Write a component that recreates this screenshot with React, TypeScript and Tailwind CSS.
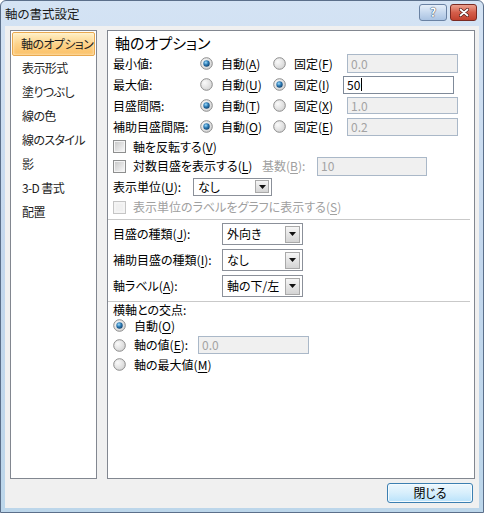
import React from "react";

const Radio = ({ checked, disabled }: { checked?: boolean; disabled?: boolean }) => (
  <svg width="13" height="13" viewBox="0 0 13 13" className="shrink-0">
    <defs>
      <radialGradient id="rOff" cx="0.35" cy="0.35" r="0.8">
        <stop offset="0" stopColor="#fafafa" />
        <stop offset="1" stopColor="#cfcfcf" />
      </radialGradient>
      <radialGradient id="rOn" cx="0.4" cy="0.35" r="0.7">
        <stop offset="0" stopColor="#9fdcfb" />
        <stop offset="0.5" stopColor="#2c7ab4" />
        <stop offset="1" stopColor="#0f3f6b" />
      </radialGradient>
    </defs>
    <circle cx="6.5" cy="6.5" r="5.8" fill="url(#rOff)" stroke={disabled ? "#c2c2c2" : "#8c8c8c"} strokeWidth="1" />
    {checked && <circle cx="6.5" cy="6.5" r="3.2" fill="url(#rOn)" />}
  </svg>
);

const Check = ({ disabled }: { disabled?: boolean }) => (
  <div
    className={
      disabled
        ? "w-[13px] h-[13px] shrink-0 border border-[#c5c5c5] bg-[#f4f4f4] p-[2px]"
        : "w-[13px] h-[13px] shrink-0 border border-[#8e8f8f] bg-[#f4f4f4] p-[1px]"
    }
  >
    <div
      className={
        disabled
          ? "w-full h-full bg-[#f0f0f0]"
          : "w-full h-full bg-linear-to-br from-[#cbcbcb] to-[#f6f6f6]"
      }
    />
  </div>
);

const U = ({ children }: { children: React.ReactNode }) => <span className="underline underline-offset-[2px]">{children}</span>;

const Field = ({ value, active, className }: { value: string; active?: boolean; className: string }) => (
  <div
    className={
      (active
        ? "border border-[#7f8a99] bg-white text-black "
        : "border border-[#aab8c8] bg-[#f0f0f0] text-[#a3a3a3] ") +
      "flex items-center pl-[3px] text-[12px] leading-none " +
      className
    }
  >
    {value}
    {active && <span className="w-px h-[13px] bg-black ml-[1px]" />}
  </div>
);

const Arrow = () => (
  <svg width="7" height="4" viewBox="0 0 7 4">
    <path d="M0 0h7L3.5 4z" fill="#111" />
  </svg>
);

const Select = ({ value, className, small }: { value: string; className: string; small?: boolean }) => (
  <div className={"border border-[#8b9099] bg-white flex items-center " + className}>
    <span className="flex-1 pl-[4px] text-[12px] leading-none whitespace-nowrap">{value}</span>
    <div
      className={
        (small ? "w-[14px] h-[13px] " : "w-[15px] h-[17px] ") +
        "mr-[2px] border border-[#a9a9a9] bg-linear-to-b from-[#f6f6f6] to-[#d4d4d4] flex items-center justify-center"
      }
    >
      <Arrow />
    </div>
  </div>
);

const NAV = ["軸のオプション", "表示形式", "塗りつぶし", "線の色", "線のスタイル", "影", "3-D 書式", "配置"];

export default function App() {
  return (
    <div className="w-[484px] h-[513px] flex flex-col border border-[#5b6f8a] rounded-t-[6px] overflow-hidden bg-linear-to-b from-[#d4e3f4] via-[#c3d7ed] to-[#bcd6ea] text-[12px] text-black font-['Noto_Sans_CJK_JP',sans-serif] [font-feature-settings:'palt']">
      {/* title bar */}
      <div className="h-[25px] flex items-center pl-[4px] pr-[6px]">
        <span className="text-[12.5px] leading-none text-[#1a1a1a] pt-[1px]">軸の書式設定</span>
        <div className="ml-auto flex gap-[3px] -mt-[3px]">
          <div className="w-[28px] h-[17px] rounded-[3px] border border-[#6a82a3] bg-linear-to-b from-[#e6eff9] via-[#c6d8ee] to-[#aac3e2] flex items-center justify-center">
            <span className="text-[12px] font-bold leading-none text-white [text-shadow:0_0_1px_#1d3557,0_0_1px_#1d3557]">?</span>
          </div>
          <div className="w-[27px] h-[17px] rounded-[3px] border border-[#7a2a22] bg-linear-to-b from-[#eba08f] via-[#d45e4b] to-[#c2412e] flex items-center justify-center">
            <svg width="10" height="9" viewBox="0 0 10 9">
              <path d="M1.5 1.5l7 6M8.5 1.5l-7 6" stroke="#4a1410" strokeWidth="3" strokeLinecap="round" />
              <path d="M1.5 1.5l7 6M8.5 1.5l-7 6" stroke="#fff" strokeWidth="1.8" strokeLinecap="round" />
            </svg>
          </div>
        </div>
      </div>

      {/* client */}
      <div className="flex-1 mx-[4px] mb-[4px] bg-[#f0f0f0] flex flex-col">
        <div className="flex gap-[10px] pt-[4px] pl-[5px]">
          {/* left nav */}
          <div className="w-[87px] h-[449px] border border-[#828790] bg-white px-[1px] pt-[1px]">
            {NAV.map((n, i) => (
              <div
                key={n}
                className={
                  i === 0
                    ? "h-[24px] flex items-center pl-[8px] whitespace-nowrap tracking-[-0.6px] border border-[#e9a94f] rounded-[2px] bg-linear-to-b from-[#fff0c4] via-[#fdd38a] to-[#fbbf64] shadow-[inset_0_0_3px_#fff7df] text-[#1e1e1e]"
                    : "h-[24px] flex items-center pl-[10px] whitespace-nowrap tracking-[-0.6px] text-[#1e1e1e]"
                }
              >
                {n}
              </div>
            ))}
          </div>

          {/* right panel */}
          <div className="w-[368px] h-[449px] border border-[#828790] bg-white pl-[5px] flex flex-col">
            <div className="h-[22px] flex items-center pl-[2px] text-[15px] leading-none">軸のオプション</div>

            <div className="h-[21px] flex items-center">
              <span className="w-[87px]">最小値:</span>
              <div className="w-[73px] flex items-center gap-[8px]"><Radio checked /><span>自動(<U>A</U>)</span></div>
              <div className="w-[74px] flex items-center gap-[8px]"><Radio /><span>固定(<U>F</U>)</span></div>
              <Field value="0.0" className="w-[111px] h-[19px]" />
            </div>
            <div className="h-[21px] flex items-center">
              <span className="w-[87px]">最大値:</span>
              <div className="w-[73px] flex items-center gap-[8px]"><Radio /><span>自動(<U>U</U>)</span></div>
              <div className="w-[70px] flex items-center gap-[8px]"><Radio checked /><span>固定(<U>I</U>)</span></div>
              <Field value="50" active className="w-[111px] h-[18px]" />
            </div>
            <div className="h-[21px] flex items-center">
              <span className="w-[87px]">目盛間隔:</span>
              <div className="w-[73px] flex items-center gap-[8px]"><Radio checked /><span>自動(<U>T</U>)</span></div>
              <div className="w-[74px] flex items-center gap-[8px]"><Radio /><span>固定(<U>X</U>)</span></div>
              <Field value="1.0" className="w-[111px] h-[17px]" />
            </div>
            <div className="h-[21px] flex items-center">
              <span className="w-[87px]">補助目盛間隔:</span>
              <div className="w-[73px] flex items-center gap-[8px]"><Radio checked /><span>自動(<U>O</U>)</span></div>
              <div className="w-[74px] flex items-center gap-[8px]"><Radio /><span>固定(<U>E</U>)</span></div>
              <Field value="0.2" className="w-[111px] h-[18px]" />
            </div>

            <div className="h-[19px] flex items-center gap-[7px]"><Check /><span>軸を反転する(<U>V</U>)</span></div>
            <div className="h-[20px] flex items-center">
              <div className="w-[149px] flex items-center gap-[7px]"><Check /><span>対数目盛を表示する(<U>L</U>)</span></div>
              <span className="w-[55px] text-[#a0a0a0]">基数(<U>B</U>):</span>
              <Field value="10" className="w-[110px] h-[19px]" />
            </div>
            <div className="h-[21px] flex items-center">
              <span className="w-[80px]">表示単位(<U>U</U>):</span>
              <Select value="なし" small className="w-[79px] h-[18px]" />
            </div>
            <div className="h-[20px] flex items-center gap-[7px] text-[#a0a0a0]"><Check disabled /><span>表示単位のラベルをグラフに表示する(<U>S</U>)</span></div>

            <div className="h-[3px] -ml-[5px] mr-[4px] border-b border-[#c9c9c9]" />

            <div className="h-[27px] flex items-center pt-[1px]">
              <span className="w-[109px]">目盛の種類(<U>J</U>):</span>
              <Select value="外向き" className="w-[81px] h-[22px]" />
            </div>
            <div className="h-[26px] flex items-center">
              <span className="w-[109px]">補助目盛の種類(<U>I</U>):</span>
              <Select value="なし" className="w-[81px] h-[22px]" />
            </div>
            <div className="h-[26px] flex items-center">
              <span className="w-[109px]">軸ラベル(<U>A</U>):</span>
              <Select value="軸の下/左" className="w-[81px] h-[22px]" />
            </div>

            <div className="h-[3px] -ml-[5px] mr-[4px] border-b border-[#c9c9c9]" />

            <div className="h-[15px] flex items-center pt-[1px]">横軸との交点:</div>
            <div className="h-[17px] flex items-center gap-[8px]"><Radio checked /><span>自動(<U>O</U>)</span></div>
            <div className="h-[22px] flex items-center">
              <div className="w-[85px] flex items-center gap-[8px]"><Radio /><span>軸の値(<U>E</U>):</span></div>
              <Field value="0.0" className="w-[111px] h-[18px]" />
            </div>
            <div className="h-[17px] flex items-center gap-[8px]"><Radio /><span>軸の最大値(<U>M</U>)</span></div>
          </div>
        </div>

        <div className="flex justify-end pr-[6px] mt-[4px]">
          <div className="w-[86px] h-[20px] rounded-[3px] border border-[#3c7fb1] bg-linear-to-b from-[#edf7fe] via-[#d7effc] to-[#b9e2fb] shadow-[inset_0_0_0_1px_#f4fbff] flex items-center justify-center">
            閉じる
          </div>
        </div>
      </div>
    </div>
  );
}
